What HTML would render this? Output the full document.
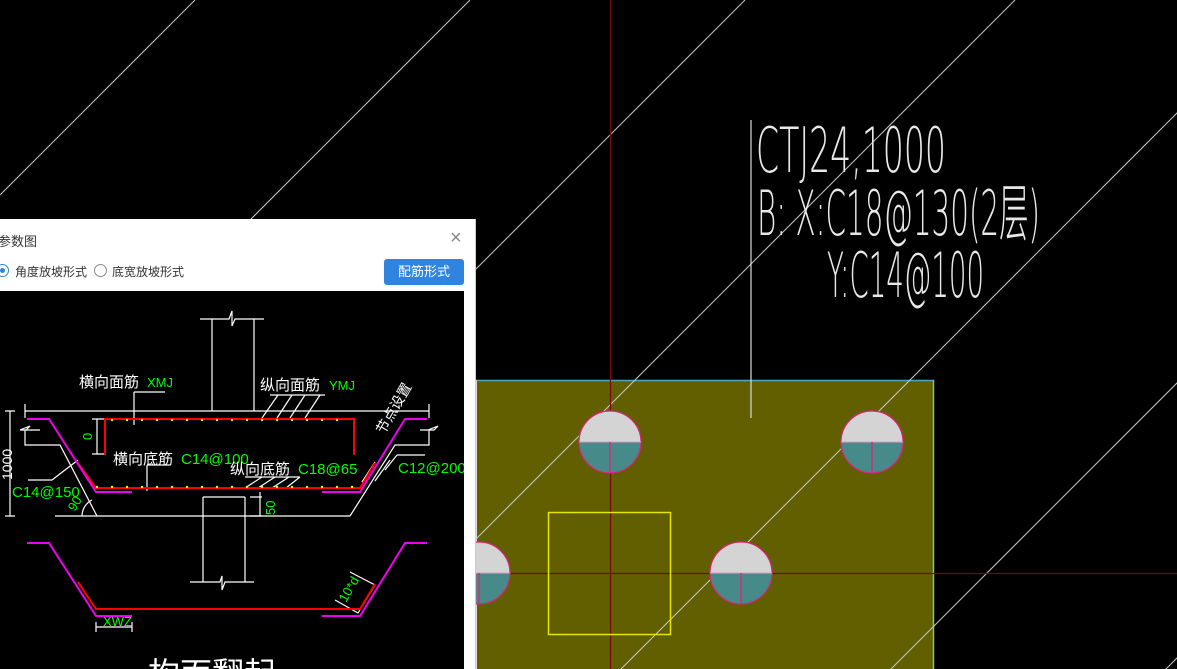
<!DOCTYPE html>
<html><head><meta charset="utf-8"><style>
html,body{margin:0;padding:0;background:#000;width:1177px;height:669px;overflow:hidden;font-family:"Liberation Sans","Noto Sans CJK SC",sans-serif}
#dlg{position:absolute;left:0;top:219px;width:475px;height:450px;background:#fff;border-right:1px solid #ccc;overflow:hidden}
.t{position:absolute;font-size:13px;color:#333}
#btn{position:absolute;left:384px;top:40px;width:80px;height:26px;background:#2f84df;border-radius:3px;color:#fff;font-size:13px;line-height:26px;text-align:center}
.rad{position:absolute;width:11px;height:11px;border:1px solid #888;border-radius:50%;background:#fff}
</style></head><body>
<svg width="1177" height="669" style="position:absolute;left:0;top:0">
<defs>
<g id="c">
<path d="M-31,0 A31,31 0 0 1 31,0 Z" fill="#d4d4d4"/>
<path d="M-31,0 A31,31 0 0 0 31,0 Z" fill="#468a8a"/>
<circle r="31" fill="none" stroke="#e0207a" stroke-width="1.2"/>
<line x1="-31" y1="0" x2="31" y2="0" stroke="#e89ac0" stroke-width="1"/>
<line x1="0" y1="0" x2="0" y2="31" stroke="#d0307a" stroke-width="1.5"/>
</g>
</defs>
<rect x="476" y="380" width="458" height="289" fill="#615f00"/>
<line x1="476" y1="380.5" x2="934" y2="380.5" stroke="#4aa8c0" stroke-width="1.5"/>
<line x1="933.5" y1="380" x2="933.5" y2="669" stroke="#7ec98a" stroke-width="1.5"/>
<line x1="476.5" y1="380" x2="476.5" y2="669" stroke="#ddd" stroke-width="1"/>
<g stroke="#c8c8c8" stroke-width="1">
<line x1="0" y1="195" x2="195" y2="0"/>
<line x1="0" y1="470" x2="470" y2="0"/>
<line x1="0" y1="745" x2="745" y2="0"/>
<line x1="0" y1="1015" x2="1015" y2="0"/>
<line x1="113" y1="1177" x2="1290" y2="0"/>
<line x1="383" y1="1177" x2="1560" y2="0"/>
<line x1="658" y1="1177" x2="1835" y2="0"/>
</g>
<line x1="610.5" y1="0" x2="610.5" y2="669" stroke="#7a0a0a" stroke-width="1.2"/>
<line x1="470" y1="573.5" x2="1177" y2="573.5" stroke="#7a0a0a" stroke-width="1.2"/>
<rect x="548.5" y="512.5" width="122" height="122" fill="none" stroke="#e6e600" stroke-width="1.5"/>
<use href="#c" transform="translate(610,442)"/>
<use href="#c" transform="translate(872,442)"/>
<use href="#c" transform="translate(741,573)"/>
<use href="#c" transform="translate(479,573)"/>
<line x1="751" y1="120" x2="751" y2="418" stroke="#ddd" stroke-width="1.2"/>
<g fill="#e8e8e8" font-family="'DejaVu Sans','Liberation Sans','Noto Sans CJK SC',sans-serif" font-weight="200" font-size="62">
<text x="756" y="172" textLength="190" lengthAdjust="spacingAndGlyphs">CTJ24,1000</text>
<text x="757" y="235" textLength="283" lengthAdjust="spacingAndGlyphs">B: X:C18@130(2层)</text>
<text x="827" y="297" textLength="157" lengthAdjust="spacingAndGlyphs">Y:C14@100</text>
</g>
</svg>
<div id="dlg">
<div class="t" style="left:-2px;top:12px">参数图</div>
<div class="t" style="left:450px;top:8px;font-size:20px;color:#888">×</div>
<div class="rad" style="left:-4px;top:45px;border-color:#2f84df"><div style="position:absolute;left:3px;top:3px;width:5px;height:5px;border-radius:50%;background:#2f84df"></div></div>
<div class="t" style="left:15px;top:44px;font-size:12px">角度放坡形式</div>
<div class="rad" style="left:94px;top:45px"></div>
<div class="t" style="left:112px;top:44px;font-size:12px">底宽放坡形式</div>
<div id="btn">配筋形式</div>
<svg width="464" height="378" style="position:absolute;left:0;top:72px;background:#000">
<g transform="translate(0,-291)" fill="none" stroke-width="1.2">
<g stroke="#fff">
<path d="M200,319H229L232,311V326L235,319H264M212,319V411M254,319V411"/>
<path d="M25,411H429M25,404V418M429,404V418"/>
<path d="M20,430L30,426L26,430H40M25,430V445H60L97,516M20,430H40"/>
<path d="M428,430L438,426L434,430H420M429,430V445H395L350,516"/>
<path d="M55,516H350M5,411H15M5,516H15M10,411V516"/>
<path d="M92,419H105M92,454H105M97,419V454"/>
<path d="M203,497H245M203,497V582M245,497V582M190,582H220L222,576V590L225,582H254"/>
<path d="M250,497H262M260,492V516M250,516H262"/>
<path d="M134,392H165M134,392V425M147,465H170M147,465V491"/>
<path d="M270,395H325M262,418L278,395M277,418L292,395M290,418L305,395M305,418L320,395"/>
<path d="M245,477H300M245,488L262,477M258,488L275,477M272,488L289,477M286,488L300,477"/>
<path d="M28,480H52L78,460M397,455H425M385,470L397,455M375,481L390,460M362,482L375,462"/>
<path d="M82,516A18,18 0 0 1 92,500"/>
<path d="M96,627H132M96,622V632M132,622V632"/>
<path d="M350,572L375,585L358,613L335,600"/>
</g>
<path d="M105,455V419H354V455M77,462L96,488H360L375,463" stroke="#f00" stroke-width="2"/>
<path d="M78,582L96,609H360L375,584" stroke="#f00" stroke-width="2"/>
<path d="M27,419H49L96,492H132M427,419H405L360,492H322" stroke="#e0e" stroke-width="2"/>
<path d="M27,543H49L96,616H132M427,543H405L360,616H322" stroke="#e0e" stroke-width="2"/>
<g fill="#ff0" stroke="none">
<circle cx="112" cy="420" r="1.2"/><circle cx="127" cy="420" r="1.2"/><circle cx="142" cy="420" r="1.2"/><circle cx="157" cy="420" r="1.2"/><circle cx="172" cy="420" r="1.2"/><circle cx="187" cy="420" r="1.2"/><circle cx="202" cy="420" r="1.2"/><circle cx="217" cy="420" r="1.2"/><circle cx="232" cy="420" r="1.2"/><circle cx="247" cy="420" r="1.2"/><circle cx="262" cy="420" r="1.2"/><circle cx="277" cy="420" r="1.2"/><circle cx="292" cy="420" r="1.2"/><circle cx="307" cy="420" r="1.2"/><circle cx="322" cy="420" r="1.2"/><circle cx="337" cy="420" r="1.2"/>
<circle cx="97" cy="487" r="1.2"/><circle cx="112" cy="487" r="1.2"/><circle cx="127" cy="487" r="1.2"/><circle cx="142" cy="487" r="1.2"/><circle cx="157" cy="487" r="1.2"/><circle cx="172" cy="487" r="1.2"/><circle cx="187" cy="487" r="1.2"/><circle cx="202" cy="487" r="1.2"/><circle cx="217" cy="487" r="1.2"/><circle cx="232" cy="487" r="1.2"/><circle cx="247" cy="487" r="1.2"/><circle cx="262" cy="487" r="1.2"/><circle cx="277" cy="487" r="1.2"/><circle cx="292" cy="487" r="1.2"/><circle cx="307" cy="487" r="1.2"/><circle cx="322" cy="487" r="1.2"/><circle cx="337" cy="487" r="1.2"/><circle cx="352" cy="487" r="1.2"/>
</g>
<g stroke="none" font-family="'Liberation Sans','Noto Sans CJK SC',sans-serif" font-size="15">
<text x="79" y="387" fill="#fff">横向面筋</text><text x="147" y="387" fill="#0f0" font-size="13">XMJ</text>
<text x="260" y="390" fill="#fff">纵向面筋</text><text x="329" y="390" fill="#0f0" font-size="13">YMJ</text>
<text x="113" y="464" fill="#fff">横向底筋</text><text x="181" y="464" fill="#0f0">C14@100</text>
<text x="230" y="474" fill="#fff">纵向底筋</text><text x="298" y="474" fill="#0f0">C18@65</text>
<text x="398" y="473" fill="#0f0">C12@200</text>
<text x="12" y="497" fill="#0f0">C14@150</text>
<text x="103" y="626" fill="#0f0" font-size="13">XWZ</text>
<text transform="translate(384,435) rotate(-60)" fill="#fff" font-size="14">节点设置</text>
<text transform="translate(12,480) rotate(-90)" fill="#fff" font-size="14">1000</text>
<text transform="translate(92,440) rotate(-90)" fill="#0f0" font-size="13">0</text>
<text transform="translate(275,515) rotate(-90)" fill="#0f0" font-size="13">50</text>
<text transform="translate(75,512) rotate(-60)" fill="#0f0" font-size="13">90</text>
<text transform="translate(346,603) rotate(-60)" fill="#0f0" font-size="13">10*d</text>
<text x="148" y="685" fill="#fff" font-size="32">构面翻起</text>
</g>
</g>
</svg>
</div>
</body></html>
